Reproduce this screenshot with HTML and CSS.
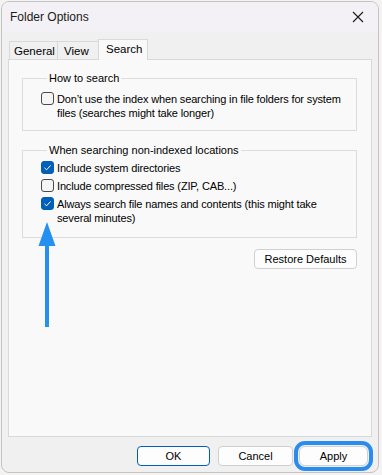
FILE: index.html
```html
<!DOCTYPE html>
<html lang="en">
<head>
  <meta charset="UTF-8">
  <meta name="viewport" content="width=device-width, initial-scale=1.0">
  <title>Folder Options</title>
  <link rel="stylesheet" href="styles.css">
</head>
<body>

  <div class="window">
    <div class="titlebar">
      <span class="title">Folder Options</span>
      <svg class="close" width="12" height="12" viewBox="0 0 12 12">
        <path d="M1 1 L11 11 M11 1 L1 11" stroke="#1a1a1a" stroke-width="1.1" fill="none"/>
      </svg>
    </div>

    <div class="content">
      <!-- Tabs -->
      <div class="tabs">
        <div class="tab">General</div>
        <div class="tab">View</div>
        <div class="tab active">Search</div>
      </div>

      <div class="panel">
        <fieldset class="group">
          <legend>How to search</legend>
          <label class="option">
            <span class="box"></span>
            <span class="text">Don’t use the index when searching in file folders for system files (searches might take longer)</span>
          </label>
        </fieldset>

        <fieldset class="group group-locations">
          <legend>When searching non-indexed locations</legend>
          <label class="option">
            <span class="box checked">
              <svg width="9" height="9" viewBox="0 0 9 9"><path d="M1.5 4.8 L3.6 6.8 L7.6 2.4" stroke="#fff" stroke-width="1" fill="none"/></svg>
            </span>
            <span class="text">Include system directories</span>
          </label>
          <label class="option">
            <span class="box"></span>
            <span class="text">Include compressed files (ZIP, CAB...)</span>
          </label>
          <label class="option">
            <span class="box checked">
              <svg width="9" height="9" viewBox="0 0 9 9"><path d="M1.5 4.8 L3.6 6.8 L7.6 2.4" stroke="#fff" stroke-width="1" fill="none"/></svg>
            </span>
            <span class="text">Always search file names and contents (this might take several minutes)</span>
          </label>
        </fieldset>

        <div class="restore-row">
          <button class="btn">Restore Defaults</button>
        </div>

        <!-- Pointer arrow drawn over the dialog -->
        <svg class="arrow" width="20" height="108" viewBox="0 0 20 108">
          <path d="M10 0 L18.5 24 L12 24 L12 105 L8 105 L8 24 L1.5 24 Z" fill="#2590f0"/>
        </svg>
      </div>

      <div class="footer">
        <button class="btn btn-ok">OK</button>
        <button class="btn btn-cancel">Cancel</button>
        <button class="btn btn-apply">Apply</button>
      </div>
    </div>
  </div>

</body>
</html>
```

FILE: styles.css
```css
body {
  margin: 0;
  padding: 1px;
  background-color: #f4f3f2;
  font-family: "Liberation Sans", Arial, sans-serif;
  font-size: 11px;
  color: #000;
}

.window {
  width: 376px;
  height: 470px;
  border: 1px solid #c4c4c4;
  border-radius: 8px;
  background-color: #f0f0f0;
  overflow: hidden;
  display: flex;
  flex-direction: column;
}

.titlebar {
  height: 30px;
  background-color: #f3f1f5;
  display: flex;
  align-items: center;
  justify-content: space-between;
  padding: 0 8px 0 8px;
  flex-shrink: 0;
}

.title {
  font-family: "Segoe UI", "Liberation Sans", sans-serif;
  font-size: 12px;
  color: #1a1a1a;
  padding-bottom: 1px;
}

.close {
  margin-right: 6px;
}

.content {
  padding: 7px 6px 0 6px;
  display: flex;
  flex-direction: column;
  flex: 1;
}

.tabs {
  display: flex;
  align-items: flex-end;
  height: 20px;
  padding-left: 1px;
  position: relative;
  z-index: 1;
}

.tab {
  height: 18px;
  line-height: 18px;
  padding: 0 4px;
  border: 1px solid #d9d9d9;
  border-bottom: none;
  box-sizing: border-box;
  background-color: #f0f0f0;
  margin-right: -1px;
  font-size: 11.5px;
}

.tab:first-child {
  width: 49px;
}

.tab:nth-child(2) {
  width: 42px;
  padding-left: 6px;
}

.tab.active {
  height: 21px;
  width: 50px;
  line-height: 18px;
  padding-left: 7px;
  background-color: #f9f9f9;
  margin-bottom: -1px;
}

.panel {
  height: 378px;
  box-sizing: border-box;
  border: 1px solid #d9d9d9;
  background-color: #f9f9f9;
  padding: 12px 14px 0 13px;
  position: relative;
}

.group {
  margin: 0;
  padding: 7px 4px 10px 18px;
  border: 1px solid #dcdcdc;
}

.group legend {
  padding: 0 2px;
  margin-left: 6px;
  line-height: 13px;
}

.group-locations {
  margin-top: 13px;
  padding-top: 4px;
  padding-bottom: 12px;
}

.group-locations .option + .option {
  margin-top: 4px;
}

.option {
  display: flex;
  align-items: flex-start;
  line-height: 14px;
  letter-spacing: -0.15px;
}

.box {
  width: 13px;
  height: 13px;
  box-sizing: border-box;
  border: 1px solid #4a4a4a;
  border-radius: 3px;
  background-color: #f5f5f5;
  flex-shrink: 0;
  margin-right: 3px;
  display: flex;
  align-items: center;
  justify-content: center;
}

.box.checked {
  background-color: #005fb8;
  border-color: #005fb8;
}

.text {
  padding-right: 0;
}

.restore-row {
  display: flex;
  justify-content: flex-end;
  margin-top: 11px;
}

.btn {
  font-family: "Liberation Sans", Arial, sans-serif;
  font-size: 11px;
  height: 20px;
  padding: 0;
  background-color: #fdfdfd;
  border: 1px solid #d0d0d0;
  border-radius: 4px;
  color: #000;
}

.restore-row .btn {
  width: 103px;
}

.arrow {
  position: absolute;
  left: 28px;
  top: 162px;
}

.footer {
  display: flex;
  justify-content: flex-end;
  align-items: center;
  height: 37px;
  padding-right: 4px;
}

.btn-ok {
  width: 73px;
  border-color: #005fb8;
  margin-right: 8px;
}

.btn-cancel {
  width: 75px;
  margin-right: 6px;
}

.btn-apply {
  width: 69px;
  outline: 4px solid #2a8cec;
  outline-offset: 1px;
  border-radius: 6px;
}
```
